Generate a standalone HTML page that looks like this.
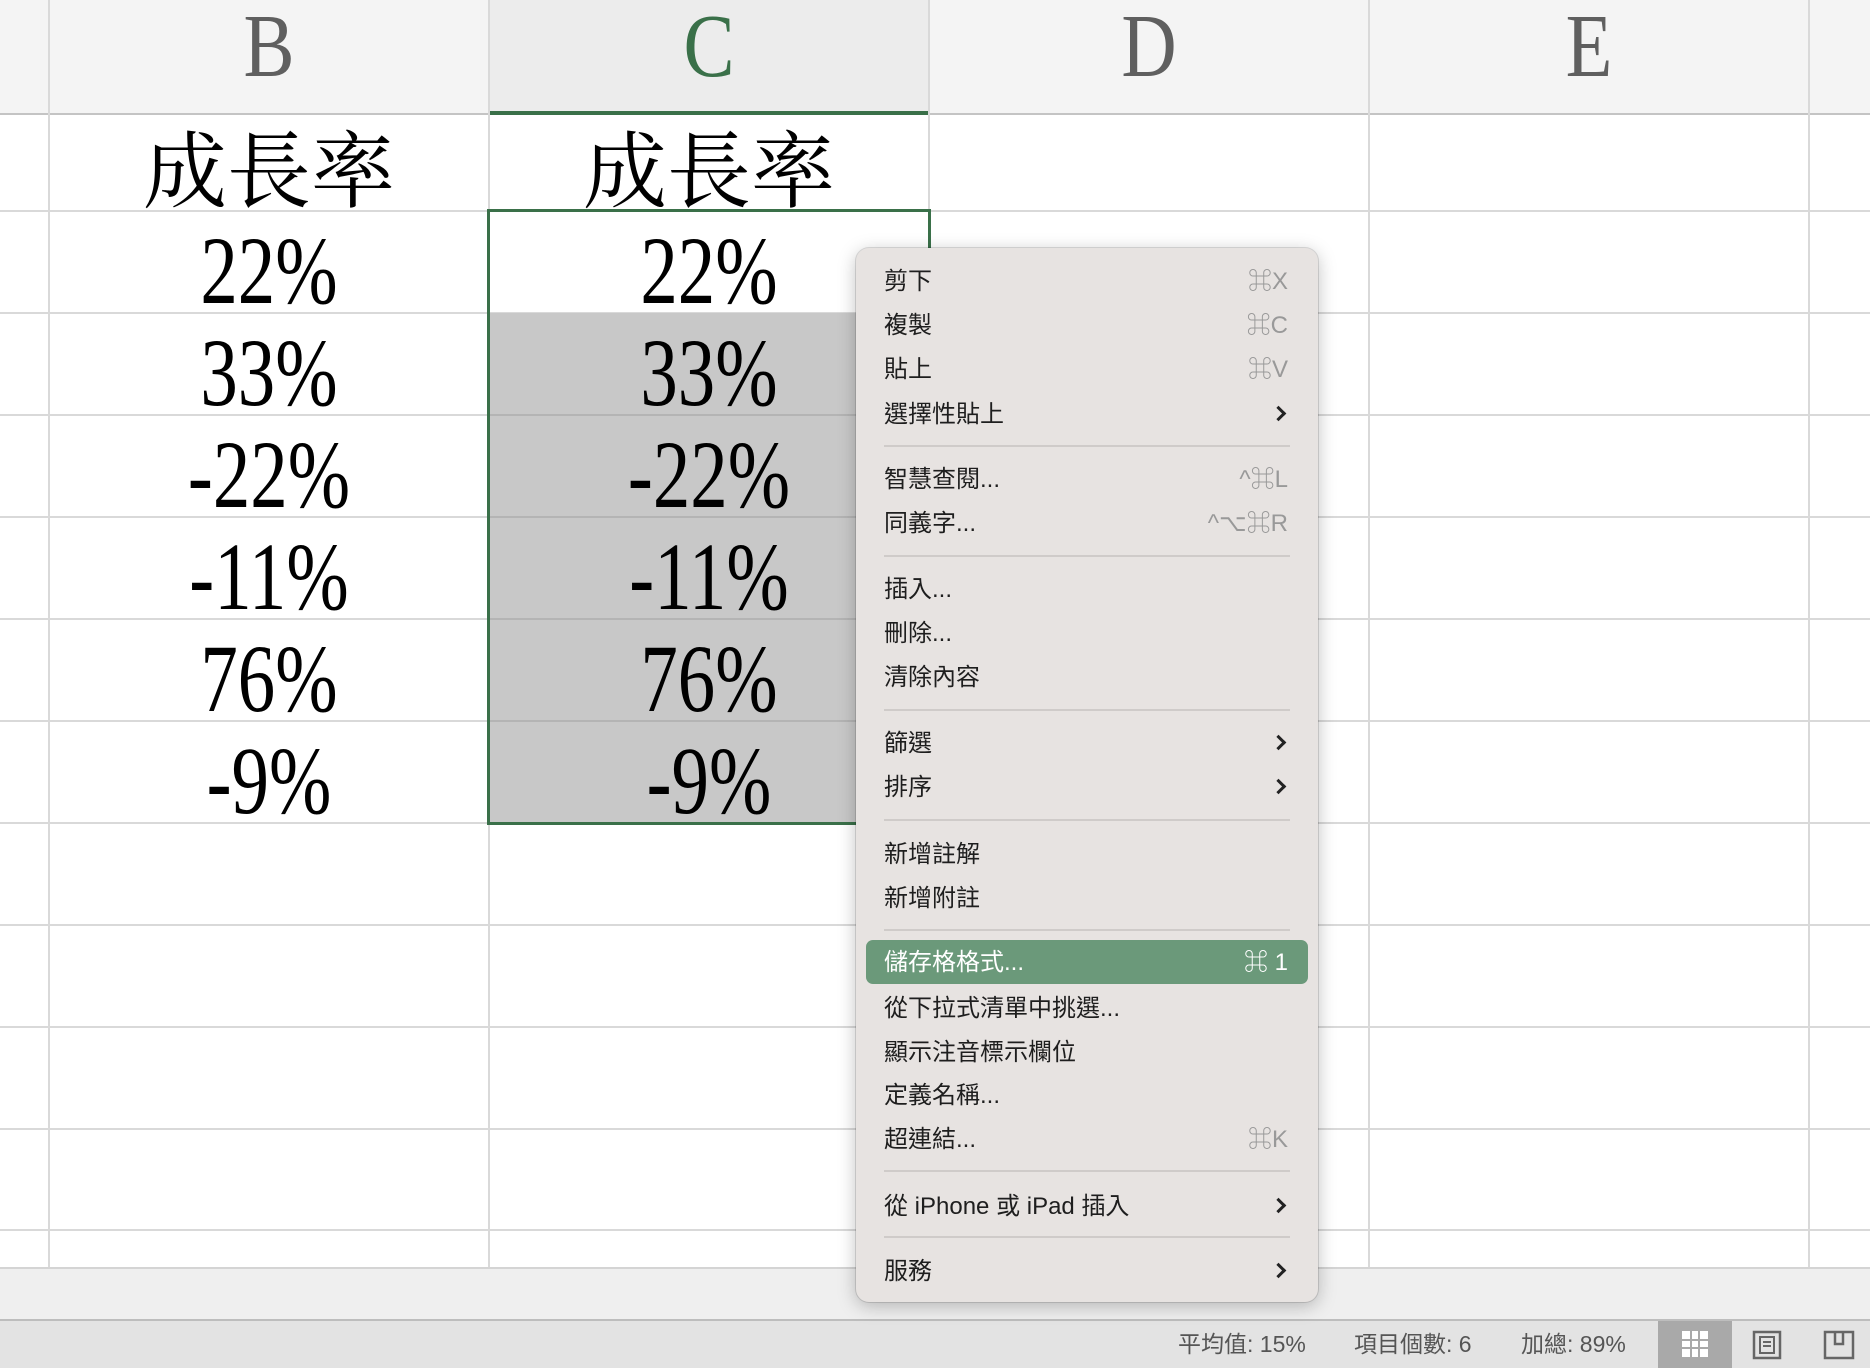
<!DOCTYPE html>
<html><head><meta charset="utf-8"><style>
*{margin:0;padding:0;box-sizing:border-box}
body{width:1870px;height:1368px;overflow:hidden;background:#fff;position:relative;font-family:"Liberation Sans","Noto Sans CJK TC",sans-serif}
.a{position:absolute}
.hdr{background:#f4f4f4}
.vl{position:absolute;width:2px;background:#d9d9d9}
.hl{position:absolute;height:2px;background:#d9d9d9}
.col{position:absolute;font-family:"Liberation Serif",serif;font-size:90px;line-height:90px;color:#5f5f5f;text-align:center;transform:scaleX(.85)}
.num{position:absolute;font-family:"Liberation Serif",serif;font-size:96px;line-height:100px;color:#000;text-align:center;width:440px;transform:scaleX(.78)}
.ttl{position:absolute;font-family:"Noto Serif CJK SC","Noto Serif CJK TC",serif;font-size:84px;line-height:84px;color:#000;text-align:center;width:440px}
.menu{position:absolute;left:856px;top:248px;width:462px;height:1054px;background:#e7e3e1;border-radius:13px;box-shadow:0 4px 18px rgba(0,0,0,.25),0 0 0 1px rgba(0,0,0,.12)}
.it{position:absolute;left:28px;font-size:24px;line-height:30px;color:#1e1e1e;white-space:nowrap}
.sc{position:absolute;right:30px;font-size:24px;line-height:30px;color:#999;white-space:nowrap}
.sep{position:absolute;left:28px;right:28px;height:2px;background:#cfcbc9}
.chev{position:absolute;right:34px;width:11px;height:11px;border-right:3px solid #222;border-top:3px solid #222;transform:rotate(45deg)}
.st{position:absolute;top:1330px;font-size:23px;line-height:28px;color:#555}
</style></head><body>
<div class="a hdr" style="left:0;top:0;width:1870px;height:114px"></div>
<div class="a" style="left:489px;top:0;width:440px;height:114px;background:#ececec"></div>
<div class="hl" style="left:0;top:113px;width:1870px;background:#c4c4c4"></div>
<div class="a" style="left:489px;top:111px;width:440px;height:4px;background:#3a7049"></div>
<div class="vl" style="left:48px;top:0;height:1267px"></div>
<div class="vl" style="left:488px;top:0;height:1267px"></div>
<div class="vl" style="left:928px;top:0;height:1267px"></div>
<div class="vl" style="left:1368px;top:0;height:1267px"></div>
<div class="vl" style="left:1808px;top:0;height:1267px"></div>
<div class="hl" style="left:0;top:210px;width:1870px"></div>
<div class="hl" style="left:0;top:312px;width:1870px"></div>
<div class="hl" style="left:0;top:414px;width:1870px"></div>
<div class="hl" style="left:0;top:516px;width:1870px"></div>
<div class="hl" style="left:0;top:618px;width:1870px"></div>
<div class="hl" style="left:0;top:720px;width:1870px"></div>
<div class="hl" style="left:0;top:822px;width:1870px"></div>
<div class="hl" style="left:0;top:924px;width:1870px"></div>
<div class="hl" style="left:0;top:1026px;width:1870px"></div>
<div class="hl" style="left:0;top:1128px;width:1870px"></div>
<div class="hl" style="left:0;top:1229px;width:1870px"></div>
<div class="a" style="left:490px;top:313px;width:438px;height:509px;background:#c8c8c8"></div>
<div class="hl" style="left:490px;top:414px;width:438px;background:#b4b4b4"></div>
<div class="hl" style="left:490px;top:516px;width:438px;background:#b4b4b4"></div>
<div class="hl" style="left:490px;top:618px;width:438px;background:#b4b4b4"></div>
<div class="hl" style="left:490px;top:720px;width:438px;background:#b4b4b4"></div>
<div class="a" style="left:487px;top:209px;width:444px;height:616px;border:3px solid #3a7049"></div>
<div class="col" style="left:49px;top:2px;width:440px">B</div>
<div class="col" style="left:489px;top:2px;width:440px;color:#3a7049">C</div>
<div class="col" style="left:929px;top:2px;width:440px">D</div>
<div class="col" style="left:1369px;top:2px;width:440px">E</div>
<div class="ttl" style="left:49px;top:124px">成長率</div>
<div class="ttl" style="left:489px;top:124px">成長率</div>
<div class="num" style="left:49px;top:221px">22%</div><div class="num" style="left:489px;top:221px">22%</div>
<div class="num" style="left:49px;top:323px">33%</div><div class="num" style="left:489px;top:323px">33%</div>
<div class="num" style="left:49px;top:425px">-22%</div><div class="num" style="left:489px;top:425px">-22%</div>
<div class="num" style="left:49px;top:527px">-11%</div><div class="num" style="left:489px;top:527px">-11%</div>
<div class="num" style="left:49px;top:629px">76%</div><div class="num" style="left:489px;top:629px">76%</div>
<div class="num" style="left:49px;top:731px">-9%</div><div class="num" style="left:489px;top:731px">-9%</div>
<div class="a" style="left:0;top:1267px;width:1870px;height:53px;background:#efefef;border-top:2px solid #d4d4d4"></div>
<div class="a" style="left:0;top:1319px;width:1870px;height:49px;background:#e3e3e3;border-top:2px solid #bdbdbd"></div>
<div class="st" style="left:1178px">平均值: 15%</div>
<div class="st" style="left:1354px">項目個數: 6</div>
<div class="st" style="left:1521px">加總: 89%</div>
<div class="a" style="left:1658px;top:1321px;width:74px;height:47px;background:#a9a9a9"></div>
<svg class="a" style="left:1681px;top:1330px" width="28" height="28" viewBox="0 0 28 28"><rect x="1" y="1" width="26" height="26" fill="#fff"/><g stroke="#a9a9a9" stroke-width="2"><line x1="10" y1="1" x2="10" y2="27"/><line x1="18" y1="1" x2="18" y2="27"/><line x1="1" y1="10" x2="27" y2="10"/><line x1="1" y1="18" x2="27" y2="18"/></g></svg>
<svg class="a" style="left:1752px;top:1330px" width="30" height="30" viewBox="0 0 30 30"><rect x="2" y="2" width="26" height="26" fill="none" stroke="#666" stroke-width="2.5"/><rect x="8" y="7" width="14" height="16" fill="none" stroke="#666" stroke-width="2"/><line x1="11" y1="12" x2="19" y2="12" stroke="#666" stroke-width="2"/><line x1="11" y1="16" x2="19" y2="16" stroke="#666" stroke-width="2"/></svg>
<svg class="a" style="left:1823px;top:1330px" width="32" height="30" viewBox="0 0 32 30"><path d="M2 2H30V28H2Z M12 2V14H20V2" fill="none" stroke="#666" stroke-width="2.5"/></svg>
<div class="menu">
<div class="it" style="top:19px">剪下</div><div class="sc" style="top:19px">⌘X</div>
<div class="it" style="top:63px">複製</div><div class="sc" style="top:63px">⌘C</div>
<div class="it" style="top:107px">貼上</div><div class="sc" style="top:107px">⌘V</div>
<div class="it" style="top:152px">選擇性貼上</div><div class="chev" style="top:160px"></div>
<div class="sep" style="top:197px"></div>
<div class="it" style="top:217px">智慧查閱...</div><div class="sc" style="top:217px">^⌘L</div>
<div class="it" style="top:261px">同義字...</div><div class="sc" style="top:261px">^⌥⌘R</div>
<div class="sep" style="top:307px"></div>
<div class="it" style="top:327px">插入...</div>
<div class="it" style="top:371px">刪除...</div>
<div class="it" style="top:415px">清除內容</div>
<div class="sep" style="top:461px"></div>
<div class="it" style="top:481px">篩選</div><div class="chev" style="top:489px"></div>
<div class="it" style="top:525px">排序</div><div class="chev" style="top:533px"></div>
<div class="sep" style="top:571px"></div>
<div class="it" style="top:592px">新增註解</div>
<div class="it" style="top:636px">新增附註</div>
<div class="sep" style="top:681px"></div>
<div class="a" style="left:10px;top:692px;width:442px;height:44px;background:#6b997a;border-radius:7px"></div>
<div class="it" style="top:700px;color:#fff">儲存格格式...</div><div class="sc" style="top:700px;color:#fff">⌘ 1</div>
<div class="it" style="top:746px">從下拉式清單中挑選...</div>
<div class="it" style="top:790px">顯示注音標示欄位</div>
<div class="it" style="top:833px">定義名稱...</div>
<div class="it" style="top:877px">超連結...</div><div class="sc" style="top:877px">⌘K</div>
<div class="sep" style="top:922px"></div>
<div class="it" style="top:944px">從 iPhone 或 iPad 插入</div><div class="chev" style="top:952px"></div>
<div class="sep" style="top:988px"></div>
<div class="it" style="top:1009px">服務</div><div class="chev" style="top:1017px"></div>
</div>
</body></html>
